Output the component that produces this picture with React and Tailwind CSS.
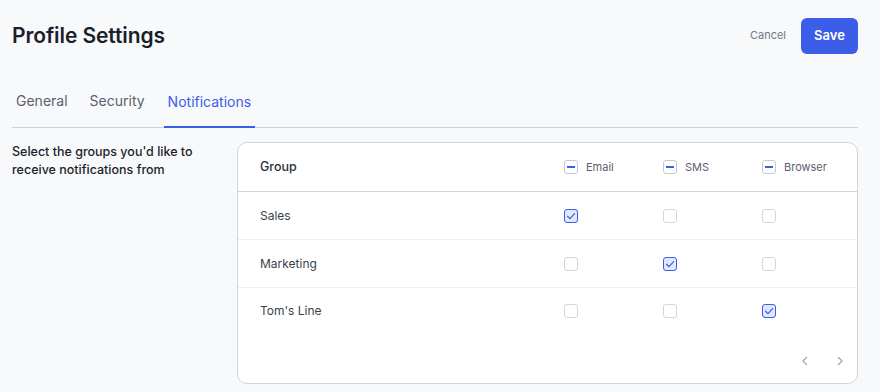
import React from "react";

function Box({ state }) {
  if (state === "ind") {
    return (
      <span className="w-[14px] h-[14px] rounded-[3px] border border-[#c5c8d3] bg-white flex items-center justify-center">
        <span className="w-[8px] h-[1.5px] bg-[#3b5de7]" />
      </span>
    );
  }
  if (state === "on") {
    return (
      <span className="w-[14px] h-[14px] rounded-[3px] border border-[#3b5de7] bg-[#dfe8ff] flex items-center justify-center">
        <svg width="10" height="10" viewBox="0 0 10 10" fill="none">
          <path d="M1.5 5.2 L4 7.6 L8.6 2.6" stroke="#3b5de7" strokeWidth="1.2" strokeLinecap="round" strokeLinejoin="round" />
        </svg>
      </span>
    );
  }
  return <span className="w-[14px] h-[14px] rounded-[3px] border border-[#d3d5dd] bg-white" />;
}

const rows = [
  { name: "Sales", v: ["on", "off", "off"] },
  { name: "Marketing", v: ["off", "on", "off"] },
  { name: "Tom's Line", v: ["off", "off", "on"] },
];

export default function App() {
  return (
    <div className="w-[880px] h-[392px] bg-[#f8f9fb] text-[#1d2130] overflow-hidden" style={{ fontFamily: "Inter, 'Noto Sans', sans-serif" }}>
      <div className="px-[12px] pr-[22px]">
        <div className="flex items-center justify-between h-[70px] pt-[1px]">
          <h1 className="text-[21px] font-semibold tracking-[-0.1px] text-[#1c1f2b]">Profile Settings</h1>
          <div className="flex items-center gap-[15px]">
            <span className="text-[11px] text-[#737887]">Cancel</span>
            <button className="w-[57px] h-[36px] rounded-[6px] bg-[#3b5de7] text-white text-[13px] font-semibold">Save</button>
          </div>
        </div>
        <div className="flex items-end h-[58px] border-b border-[#cfd1d8] pl-[4px]">
          <div className="h-[37px] text-[14px] text-[#5b6070] pr-[22px] flex items-start">General</div>
          <div className="h-[37px] text-[14px] text-[#5b6070] pr-[19px] flex items-start">Security</div>
          <div className="h-[37px] text-[14px] text-[#3b5de7] px-[4px] flex items-start border-b-2 border-[#3b5de7] -mb-[1px]">Notifications</div>
        </div>
        <div className="flex mt-[14px]">
          <div className="w-[225px] text-[12.5px] font-medium leading-[18px] text-[#1c1f2b] pt-[1px]">
            Select the groups you'd like to receive notifications from
          </div>
          <div className="w-[621px] h-[242px] bg-white border border-[#d2d4dc] rounded-[10px] flex flex-col">
            <div className="flex items-center h-[49px] border-b border-[#d2d4dc] text-[12px]">
              <div className="w-[303px] pl-[22px] text-[12.5px] font-medium text-[#2a2e3b]">Group</div>
              {["Email", "SMS", "Browser"].map((l) => (
                <div key={l} className="w-[99px] pl-[23px] flex items-center gap-[8px] text-[#5b6070] text-[11px]">
                  <Box state="ind" />
                  <span>{l}</span>
                </div>
              ))}
            </div>
            {rows.map((r, i) => (
              <div key={r.name} className={"flex items-center text-[12px] text-[#3b3f4c] " + (i < 2 ? "h-[48px] border-b border-[#eeeff2]" : "h-[46px]")}>
                <div className="w-[303px] pl-[22px]">{r.name}</div>
                {r.v.map((s, j) => (
                  <div key={j} className="w-[99px] pl-[23px] flex items-center">
                    <Box state={s} />
                  </div>
                ))}
              </div>
            ))}
            <div className="flex-1 flex items-center justify-end gap-[23px] pr-[11px] pt-[5px] text-[#a0a3ad]">
              <svg width="12" height="12" viewBox="0 0 12 12" fill="none"><path d="M7.5 2.5 L4 6 L7.5 9.5" stroke="#a3a6b0" strokeWidth="1.3" strokeLinecap="round" strokeLinejoin="round" /></svg>
              <svg width="12" height="12" viewBox="0 0 12 12" fill="none"><path d="M4.5 2.5 L8 6 L4.5 9.5" stroke="#a3a6b0" strokeWidth="1.3" strokeLinecap="round" strokeLinejoin="round" /></svg>
            </div>
          </div>
        </div>
      </div>
    </div>
  );
}
